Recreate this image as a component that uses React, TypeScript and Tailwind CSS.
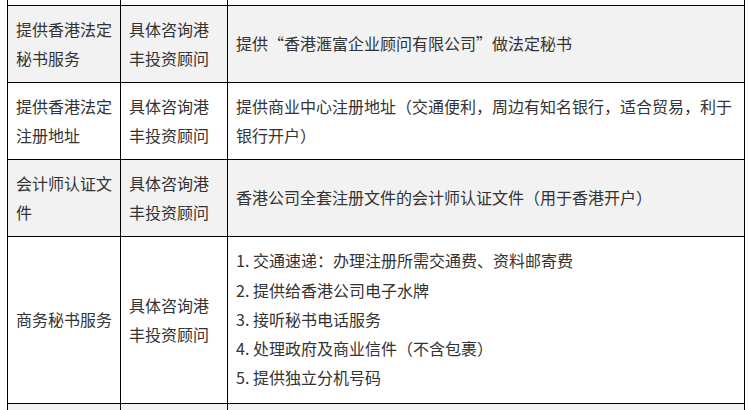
const rows = [
  {
    name: '提供香港法定秘书服务',
    owner: '具体咨询港丰投资顾问',
    detail: ['提供“香港滙富企业顾问有限公司”做法定秘书'],
    gray: true,
    h: 'h-[77px]',
  },
  {
    name: '提供香港法定注册地址',
    owner: '具体咨询港丰投资顾问',
    detail: ['提供商业中心注册地址（交通便利，周边有知名银行，适合贸易，利于银行开户）'],
    gray: false,
    h: 'h-[77px]',
  },
  {
    name: '会计师认证文件',
    owner: '具体咨询港丰投资顾问',
    detail: ['香港公司全套注册文件的会计师认证文件（用于香港开户）'],
    gray: true,
    h: 'h-[77px]',
  },
  {
    name: '商务秘书服务',
    owner: '具体咨询港丰投资顾问',
    detail: [
      '1. 交通速递：办理注册所需交通费、资料邮寄费',
      '2. 提供给香港公司电子水牌',
      '3. 接听秘书电话服务',
      '4. 处理政府及商业信件（不含包裹）',
      '5. 提供独立分机号码',
    ],
    gray: false,
    h: 'h-[167px]',
  },
];

export default function App() {
  return (
    <div
      className="h-[410px] w-[750px] overflow-hidden bg-white text-[16px] leading-[28.8px] text-[#333333]"
      style={{ fontFamily: '"Noto Sans CJK SC", "Liberation Sans", sans-serif' }}
    >
      <table className="ml-[7px] w-[738px] table-fixed border-collapse">
        <colgroup>
          <col className="w-[113px]" />
          <col className="w-[107px]" />
          <col />
        </colgroup>
        <tbody>
          {/* tail of the row above */}
          <tr className="h-[5px]">
            <td className="border-x border-b border-black p-0" />
            <td className="border-x border-b border-black p-0" />
            <td className="border-x border-b border-black p-0" />
          </tr>
          {rows.map((r) => (
            <tr key={r.name} className={`${r.h} ${r.gray ? 'bg-[#f2f2f2]' : 'bg-white'}`}>
              <td className="border border-black px-2 align-middle">{r.name}</td>
              <td className="border border-black px-2 align-middle">{r.owner}</td>
              <td className="border border-black px-2 align-middle">
                {r.detail.length > 1 ? (
                  <div className="leading-[29.25px]">
                    {r.detail.map((d) => (
                      <div key={d}>{d}</div>
                    ))}
                  </div>
                ) : (
                  r.detail[0]
                )}
              </td>
            </tr>
          ))}
          {/* next row, cut off */}
          <tr className="h-[60px] bg-[#f2f2f2]">
            <td className="border border-black px-2" />
            <td className="border border-black px-2" />
            <td className="border border-black px-2" />
          </tr>
        </tbody>
      </table>
    </div>
  );
}
